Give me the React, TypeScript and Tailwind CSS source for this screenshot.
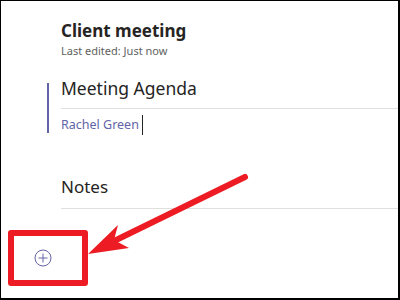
import React from "react";

function PlusCircle() {
  return (
    <svg width="18" height="18" viewBox="0 0 18 18" fill="none">
      <circle cx="9" cy="9" r="8" stroke="#6264a7" strokeWidth="1" />
      <path d="M9 4.5v9M4.5 9h9" stroke="#6264a7" strokeWidth="1" />
    </svg>
  );
}

function Arrow() {
  return (
    <svg
      className="absolute left-[-1px] top-[-1px] pointer-events-none"
      width="400"
      height="300"
      viewBox="0 0 400 300"
    >
      <line x1="245" y1="177" x2="112" y2="242" stroke="#ed1c24" strokeWidth="6" strokeLinecap="round" />
      <polygon points="88,254 118,225 114,240 129,248" fill="#ed1c24" />
    </svg>
  );
}

export default function App() {
  return (
    <div className="relative w-[400px] h-[300px] bg-white border-l border-t border-r-2 border-b-2 border-black overflow-hidden font-['Noto_Sans',sans-serif] text-[#252423]">
      <div className="flex flex-col pt-[19px]">
        <div className="pl-[60px]">
          <div className="text-[17px] leading-[22px] font-bold">Client meeting</div>
          <div className="mt-[2px] text-[11px] leading-[14px] text-[#616161]">Last edited: Just now</div>
        </div>

        <div className="mt-[18px] ml-[46px] flex">
          <div className="w-[2px] mt-[7px] mb-[2px] bg-[#6264a7]" />
          <div className="flex-1 pl-[12px]">
            <div className="text-[17.5px] leading-[24px] pb-[8px] border-b border-[#e1dfdd]">Meeting Agenda</div>
            <div className="flex items-center pt-[6px]">
              <span className="text-[12.5px] leading-[20px] text-[#6264a7]">Rachel Green</span>
              <span className="ml-[3px] w-px h-[20px] bg-[#252423]" />
            </div>
          </div>
        </div>

        <div className="mt-[40px] pl-[60px]">
          <div className="text-[17px] leading-[24px] pb-[9px] border-b border-[#e1dfdd]">Notes</div>
        </div>

        <div className="mt-[40px] pl-[33px]">
          <PlusCircle />
        </div>
      </div>

      <div className="absolute left-[7px] top-[229px] w-[80px] h-[56px] border-[6px] border-[#ed1c24] rounded-[3px]" />
      <Arrow />
    </div>
  );
}
